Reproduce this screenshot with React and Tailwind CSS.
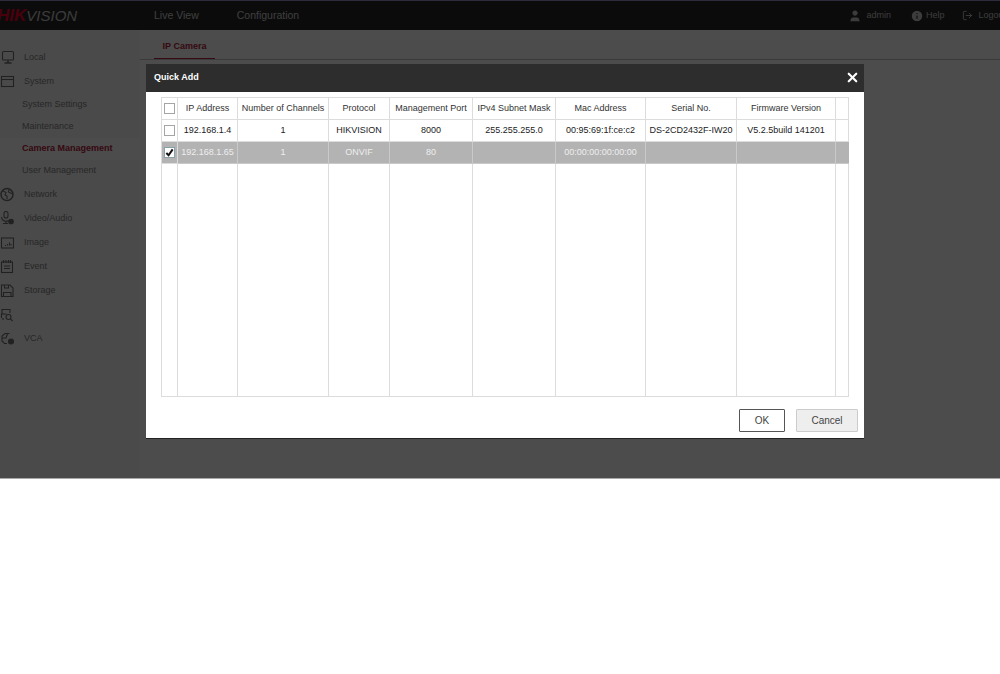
import React from 'react';
import { X, User, LogOut, Info } from 'lucide-react';

const Svg = ({ children }) => (
  <svg width="15" height="15" viewBox="0 0 15 15" fill="none" stroke="currentColor" strokeWidth="1.1">{children}</svg>
);

const icons = {
  local: <Svg><rect x="2.5" y="1.5" width="11" height="8.5" rx="1" /><path d="M8 10v2.5M4.5 13h7" strokeWidth="1.5" /></Svg>,
  system: <Svg><rect x="1.5" y="2.5" width="12" height="10" /><path d="M1.5 5.5h12" /></Svg>,
  network: <Svg><circle cx="7" cy="7.5" r="6" strokeWidth="1.5" /><path d="M3 4l3 1.5-1 2.5 2 1v3M9 2.5L8.500 5l3 1.500 1.500-.5" /></Svg>,
  video: (
    <Svg>
      <rect x="4" y="0.500" width="4" height="6.500" rx="2" />
      <path d="M1.500 6a4.500 4.500 0 0 0 7 3.500M6 10.500V12M3 12.500h5" />
      <circle cx="11" cy="10.500" r="2.300" fill="currentColor" />
    </Svg>
  ),
  image: <Svg><rect x="1.500" y="3" width="12" height="10" /><path d="M5 10.500h1M7.500 10.500V9M9.500 10.500V7.500M11 10.500V9" /></Svg>,
  event: <Svg><rect x="1.500" y="3" width="11" height="10.500" /><path d="M3.500 1v3M6 1v3M8.500 1v3M10.500 1v3M4 7h6M4 9.500h6" /></Svg>,
  storage: <Svg><path d="M1.500 2h8.500l3 3v8.500H1.500z" /><path d="M4.500 2v3h4V2M3.500 13.500V9.500h7.500v4" /></Svg>,
  search: <Svg><path d="M2 7V2.500h8V6M1.500 11V7h5M3 11v2" /><circle cx="8.500" cy="10" r="2.500" /><path d="M10.500 12l2 2" /></Svg>,
  vca: (
    <Svg>
      <path d="M9.500 2.500H5L2 5v5l2.500 2.500H7" />
      <path d="M2 7h4l1.500-4" />
      <circle cx="11" cy="10.500" r="2.500" fill="currentColor" />
    </Svg>
  ),
};

const menu = [
  { label: 'Local', icon: 'local' },
  { label: 'System', icon: 'system' },
  { label: 'System Settings', sub: true, height: 'h-[23px]' },
  { label: 'Maintenance', sub: true, height: 'h-[22px]' },
  { label: 'Camera Management', sub: true, height: 'h-[22px]', active: true },
  { label: 'User Management', sub: true, height: 'h-[22px]' },
  { label: 'Network', icon: 'network' },
  { label: 'Video/Audio', icon: 'video' },
  { label: 'Image', icon: 'image' },
  { label: 'Event', icon: 'event' },
  { label: 'Storage', icon: 'storage' },
  { label: '', icon: 'search' },
  { label: 'VCA', icon: 'vca' },
];

const columns = [
  { label: '', width: 'w-[16px]' },
  { label: 'IP Address', width: 'w-[60px]' },
  { label: 'Number of Channels', width: 'w-[91px]' },
  { label: 'Protocol', width: 'w-[61px]' },
  { label: 'Management Port', width: 'w-[83px]' },
  { label: 'IPv4 Subnet Mask', width: 'w-[83px]' },
  { label: 'Mac Address', width: 'w-[90px]' },
  { label: 'Serial No.', width: 'w-[91px]' },
  { label: 'Firmware Version', width: 'w-[99px]' },
  { label: '', width: 'w-[13px]' },
];

const rows = [
  { cells: ['192.168.1.4', '1', 'HIKVISION', '8000', '255.255.255.0', '00:95:69:1f:ce:c2', 'DS-2CD2432F-IW20', 'V5.2.5build 141201', ''] },
  { cells: ['192.168.1.65', '1', 'ONVIF', '80', '', '00:00:00:00:00:00', '', '', ''], selected: true },
];

const Check = ({ checked }) => (
  <span className={`mx-auto flex h-[11px] w-[11px] items-center justify-center border ${checked ? 'border-[#8aa0a8] bg-white' : 'border-[#a5a5a5] bg-white'}`}>
    {checked && (
      <svg width="9" height="9" viewBox="0 0 10 10" fill="none" stroke="#111" strokeWidth="2.2">
        <path d="M1.5 5.5l2.5 2.5 4.5-6.5" />
      </svg>
    )}
  </span>
);

export default function App() {
  return (
    <div className="relative h-[674px] overflow-hidden bg-white font-['Liberation_Sans',Arial,sans-serif] text-[9px]">
      <div className="flex h-[479px] flex-col">
        <header className="flex h-[30px] shrink-0 items-center overflow-hidden border-t border-[#9c94c8] bg-[#262626]">
          <div className="ml-[-3px] w-[157px] whitespace-nowrap text-[15px] italic leading-none text-[#c4c4c4]">
            <span className="text-[17px] font-bold text-[#f0002b]">HIK</span>VISION
          </div>
          <nav className="flex gap-[38px] text-[10.5px] text-[#d0d0d0]">
            <span>Live View</span>
            <span>Configuration</span>
          </nav>
          <div className="ml-auto mr-[-6px] flex items-center text-[#c8c8c8]">
            <User size={14} fill="currentColor" strokeWidth={1} />
            <span className="ml-[4px]">admin</span>
            <Info size={14} className="ml-[19px]" fill="currentColor" stroke="#262626" />
            <span className="ml-[2px]">Help</span>
            <LogOut size={11} className="ml-[18px]" />
            <span className="ml-[5px]">Logout</span>
          </div>
        </header>

        <div className="flex min-h-0 flex-1">
          <aside className="w-[140px] shrink-0 bg-[#f7f7f7] pt-[15px] text-[#858585]">
            {menu.map((item, i) => item.sub ? (
              <div key={i} className={`flex ${item.height} items-center pl-[22px] ${item.active ? 'bg-[#fdfdfd] font-bold text-[#b4243c]' : ''}`}>
                {item.label}
              </div>
            ) : (
              <div key={i} className="flex h-[24px] items-center pt-[1px]">
                <span className="flex w-[24px] shrink-0 text-[#707070]">{icons[item.icon]}</span>
                <span>{item.label}</span>
              </div>
            ))}
          </aside>
          <main className="flex-1 bg-[#ffffff]">
            <div className="h-[30px] border-b border-[#c4c4c4] pl-[14px]">
              <div className="flex h-[29px] w-[61px] items-center justify-center border-b border-[#b4243c] pt-[6px] text-[9px] font-bold text-[#b4243c]">
                IP Camera
              </div>
            </div>
          </main>
        </div>
      </div>

      <div className="absolute inset-x-0 top-0 h-[479px] border-b border-[#a8a8a8] bg-black/70" />

      <div className="absolute left-[146px] top-[64px] flex h-[374px] w-[718px] flex-col bg-white shadow-[0_1px_0_#222]">
        <div className="flex h-[28px] shrink-0 items-center justify-between bg-[#2d2d2d] pl-[8px] pr-[4px] text-white">
          <span className="font-bold">Quick Add</span>
          <X size={15} strokeWidth={3.5} className="mb-[1px]" />
        </div>
        <div className="px-[15px] pt-[5px]">
          <table className="h-[300px] w-[687px] table-fixed border-collapse text-center text-[9px] text-[#222]">
            <thead>
              <tr className="h-[22px]">
                {columns.map((col, i) => (
                  <th key={i} className={`${col.width} border border-[#dcdcdc] p-0 font-normal text-[#333]`}>
                    {i === 0 ? <Check /> : col.label}
                  </th>
                ))}
              </tr>
            </thead>
            <tbody>
              {rows.map((row, i) => (
                <tr key={i} className={`h-[22px] ${row.selected ? 'bg-[#b3b3b3] text-[#eee]' : ''}`}>
                  <td className="border border-[#dcdcdc] p-0"><Check checked={row.selected} /></td>
                  {row.cells.map((cell, j) => (
                    <td key={j} className={`overflow-hidden whitespace-nowrap border p-0 ${row.selected ? 'border-[#c9c9c9]' : 'border-[#dcdcdc]'} ${j === 8 && row.selected ? 'border-r-[#b3b3b3]' : ''}`}>
                      {cell}
                    </td>
                  ))}
                </tr>
              ))}
              <tr>
                {columns.map((col, i) => (
                  <td key={i} className="border border-[#dcdcdc] p-0" />
                ))}
              </tr>
            </tbody>
          </table>
        </div>
        <div className="flex justify-end gap-[11px] pr-[6px] pt-[12px] text-[10px] text-[#444]">
          <button className="h-[23px] w-[46px] rounded-[1px] border border-[#555] bg-white">OK</button>
          <button className="h-[23px] w-[62px] rounded-[1px] border border-[#ccc] bg-[#eeeeee]">Cancel</button>
        </div>
      </div>
    </div>
  );
}
